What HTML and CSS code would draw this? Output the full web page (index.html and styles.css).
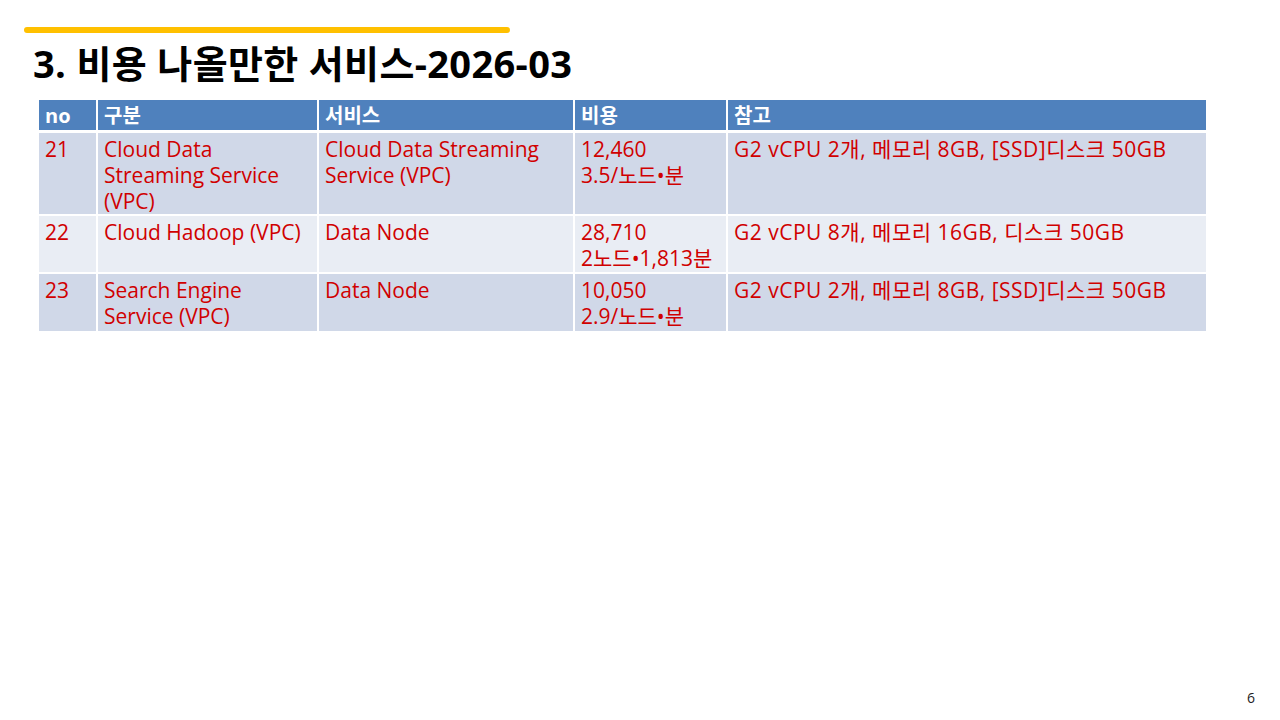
FILE: index.html
```html
<!DOCTYPE html>
<html lang="ko">
<head>
<meta charset="utf-8">
<link rel="stylesheet" href="styles.css">
</head>
<body>
<div class="slide">
  <div class="accent"></div>
  <h1 class="title">3. 비용 나올만한 서비스-2026-03</h1>
  <table class="grid">
    <colgroup>
      <col class="c1"><col class="c2"><col class="c3"><col class="c4"><col class="c5">
    </colgroup>
    <thead>
      <tr><th>no</th><th>구분</th><th>서비스</th><th>비용</th><th>참고</th></tr>
    </thead>
    <tbody>
      <tr class="odd r1">
        <td>21</td>
        <td>Cloud Data<br>Streaming Service<br>(VPC)</td>
        <td>Cloud Data Streaming<br>Service (VPC)</td>
        <td>12,460<br>3.5/노드•분</td>
        <td class="note">G2 vCPU 2개, 메모리 8GB, [SSD]디스크 50GB</td>
      </tr>
      <tr class="even r2">
        <td>22</td>
        <td>Cloud Hadoop (VPC)</td>
        <td>Data Node</td>
        <td>28,710<br>2노드•1,813분</td>
        <td class="note">G2 vCPU 8개, 메모리 16GB, 디스크 50GB</td>
      </tr>
      <tr class="odd r3">
        <td>23</td>
        <td>Search Engine<br>Service (VPC)</td>
        <td>Data Node</td>
        <td>10,050<br>2.9/노드•분</td>
        <td class="note">G2 vCPU 2개, 메모리 8GB, [SSD]디스크 50GB</td>
      </tr>
    </tbody>
  </table>
  <div class="page-no">6</div>
</div>
</body>
</html>
```
FILE: styles.css
```css
* { box-sizing: border-box; }
html, body { margin: 0; padding: 0; background: #fff; }
body { font-family: "Open Sans", "Noto Sans CJK KR", sans-serif; }
.slide {
  position: relative;
  width: 1280px;
  height: 720px;
  overflow: hidden;
  padding: 27px 0 0 0;
}
.accent {
  width: 486px;
  height: 6px;
  margin-left: 24px;
  background: #FFC000;
  border-radius: 3px;
}
.title {
  margin: 4px 0 0 33px;
  font-family: "Open Sans", "Noto Sans CJK KR", sans-serif;
  font-weight: 700;
  font-size: 38px;
  line-height: 52px;
  height: 52px;
  color: #000;
  letter-spacing: 0.35px;
}
.grid {
  margin: 11px 0 0 39px;
  width: 1167px;
  border-collapse: collapse;
  table-layout: fixed;
  font-size: 21px;
  line-height: 26px;
}
.c1 { width: 58px; }
.c2 { width: 221px; }
.c3 { width: 256px; }
.c4 { width: 153px; }
.c5 { width: 479px; }
.grid th, .grid td {
  border: 2px solid #fff;
  text-align: left;
  vertical-align: top;
  padding: 2px 4px 0 6px;
  white-space: nowrap;
}
.grid th {
  background: #4F81BD;
  color: #fff;
  font-weight: 700;
  font-size: 20px;
  height: 31px;
  padding-top: 3px;
  border-top: 0;
  border-bottom-width: 3px;
}
.grid tr > :first-child { border-left: 0; }
.grid tr > :last-child { border-right: 0; }
.grid td { color: #D00000; padding-top: 3px; }
.grid td.note { letter-spacing: 0.5px; }
.odd td { background: #D0D8E8; }
.even td { background: #E9EDF4; }
.r1 td { height: 82px; }
.r2 td { height: 58px; }
.r3 td { height: 58px; border-bottom: 0; }
.page-no {
  position: absolute;
  right: 25px;
  top: 688px;
  font-size: 14px;
  color: #222;
}
```
